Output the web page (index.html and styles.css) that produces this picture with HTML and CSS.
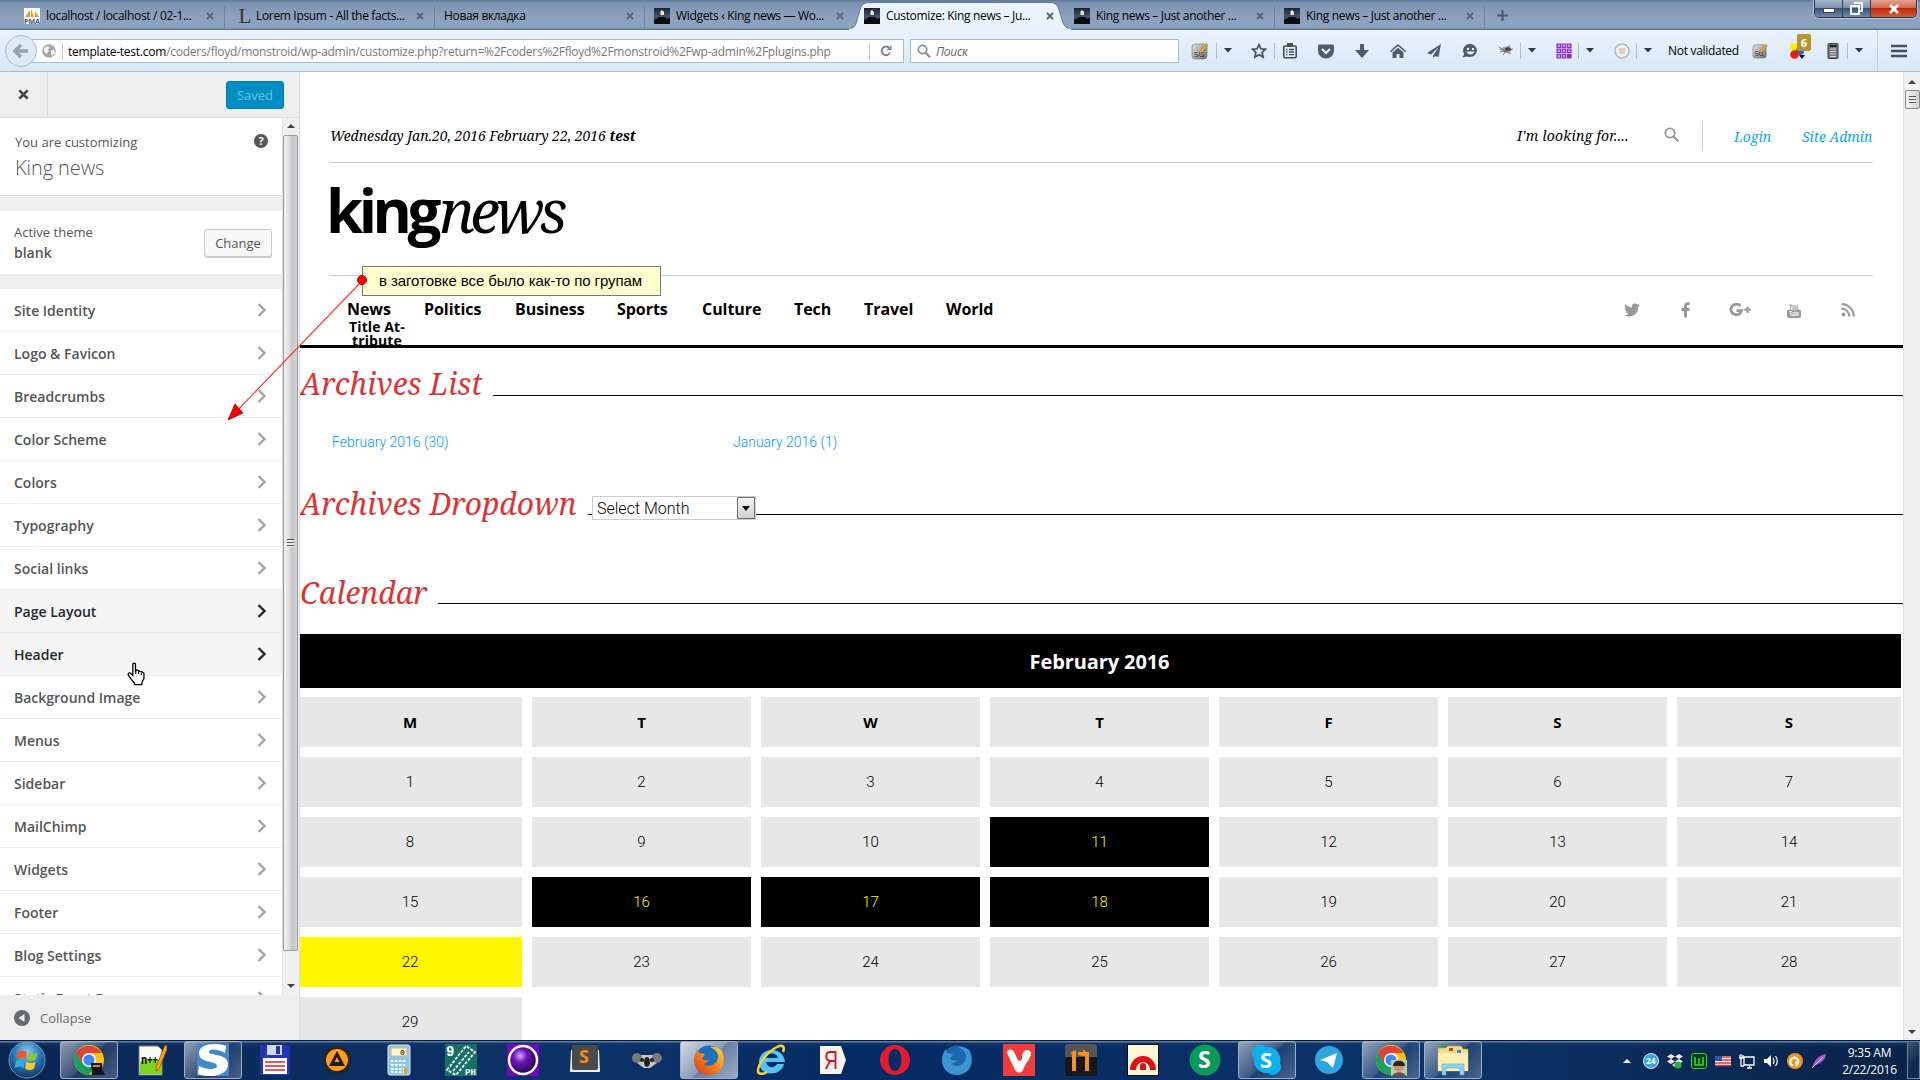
FILE: index.html
```html
<!DOCTYPE html>
<html lang="en">
<head>
<meta charset="utf-8">
<title>Customize: King news</title>
<link rel="stylesheet" href="styles.css">
</head>
<body>
<svg class="defs" width="0" height="0">
  <defs>
    <linearGradient id="night" x1="0" y1="0" x2="0" y2="1"><stop offset="0" stop-color="#1c2433"/><stop offset=".55" stop-color="#46546a"/><stop offset="1" stop-color="#0a0c10"/></linearGradient>
    <radialGradient id="orb" cx=".5" cy=".3" r=".75"><stop offset="0" stop-color="#8fd0ef"/><stop offset=".5" stop-color="#2a77b4"/><stop offset="1" stop-color="#0a2c5c"/></radialGradient>
    <radialGradient id="purple" cx=".4" cy=".35" r=".7"><stop offset="0" stop-color="#d9a8ff"/><stop offset=".35" stop-color="#6d14b8"/><stop offset="1" stop-color="#1b0040"/></radialGradient>
    <linearGradient id="fire" x1="1" y1="0" x2="0" y2="1"><stop offset="0" stop-color="#ffd83a"/><stop offset=".5" stop-color="#f58220"/><stop offset="1" stop-color="#d8331c"/></linearGradient>
    <linearGradient id="grey" x1="0" y1="0" x2="1" y2="1"><stop offset="0" stop-color="#e2e2df"/><stop offset="1" stop-color="#6d6d6b"/></linearGradient>
    <symbol id="chev" viewBox="0 0 10 16"><path d="M1.500 2 7.500 8l-6 6" fill="none" stroke="currentColor" stroke-width="2.400"/></symbol>
    <symbol id="x" viewBox="0 0 8 8"><path d="M1 1l6 6M7 1 1 7" stroke="currentColor" stroke-width="2" fill="none"/></symbol>
    <symbol id="fav" viewBox="0 0 16 16"><rect width="16" height="16" fill="url(#night)"/><path d="M0 16v-4l3-1 2-2h6l2 2 3-1v6z" fill="#0b0c0f"/><path d="M6.500 3l1.500-1 2 2v3H6.500z" fill="#f1ead2"/></symbol>
    <symbol id="caret" viewBox="0 0 8 5"><path d="M0 0h8L4 4.600z" fill="#30363c"/></symbol>
    <symbol id="scrap" viewBox="0 0 18 18"><rect x="1" y="2" width="15" height="15" rx="3" fill="url(#grey)" stroke="#777" stroke-width=".6"/><text x="3" y="15" font-size="8" font-family="Open Sans" fill="#333">SG</text><path d="M9 9 15.500 1.500 17 3l-6 7.500-2.500.700z" fill="#e5b931" stroke="#6a5a2c" stroke-width=".5"/></symbol>
    <symbol id="chrome" viewBox="0 0 32 32"><circle cx="16" cy="16" r="15" fill="#fbc116"/><path d="M3 8.500A15 15 0 0 0 16 31l6.500-11L16 16z" fill="#1aa15f"/><path d="M16 9h12.500A15 15 0 0 0 3 8.500l6 11z" fill="#db4437"/><circle cx="16" cy="16" r="7" fill="#fff"/><circle cx="16" cy="16" r="5.600" fill="#4285f4"/></symbol>
  </defs>
</svg>

<header class="tabs">
  <div class="tab"><svg class="fav" viewBox="0 0 16 16"><rect width="16" height="16" fill="#fff"/><path d="M1 9 6 2v7zM7 9V1l3 8zM11 9V3l4 6z" fill="#f7941d"/><text x="0" y="15.500" font-size="7" font-weight="bold" font-family="Open Sans" fill="#444a77">PMA</text></svg><span class="t">localhost / localhost / 02-1...</span><svg class="close"><use href="#x"/></svg></div>
  <div class="tab"><span class="fav letter">L</span><span class="t">Lorem Ipsum - All the facts...</span><svg class="close"><use href="#x"/></svg></div>
  <div class="tab bare"><span class="t">Новая вкладка</span><svg class="close"><use href="#x"/></svg></div>
  <div class="tab last"><svg class="fav"><use href="#fav"/></svg><span class="t">Widgets ‹ King news — Wo...</span><svg class="close"><use href="#x"/></svg></div>
  <div class="tab active"><svg class="shape" viewBox="0 0 226 30"><path d="M0 29.500C10 29 9 22 12 13 14 5 16 2.500 23 2.500H202c7 0 9 2.500 11 10.500 3 9 3 16 13 16.500V30H0z" fill="#eaf3fc" stroke="#5f7793"/><path d="M2 30h222" stroke="#eaf3fc" stroke-width="2.500"/></svg><svg class="fav"><use href="#fav"/></svg><span class="t">Customize: King news – Ju...</span><svg class="close"><use href="#x"/></svg></div>
  <div class="tab"><svg class="fav"><use href="#fav"/></svg><span class="t">King news – Just another ...</span><svg class="close"><use href="#x"/></svg></div>
  <div class="tab"><svg class="fav"><use href="#fav"/></svg><span class="t">King news – Just another ...</span><svg class="close"><use href="#x"/></svg></div>
  <svg class="plus" viewBox="0 0 11 11"><path d="M5.500 0v11M0 5.500h11" stroke="#4a5a6b" stroke-width="2.200"/></svg>
  <div class="winbtns">
    <span class="wb"><svg width="12" height="6"><rect x=".5" y=".5" width="11" height="4" fill="#fff" stroke="#445"/></svg></span>
    <span class="wb"><svg width="13" height="13"><path d="M4 1h8v8H9M1 4h8v8H1z" fill="none" stroke="#fff" stroke-width="1.800"/></svg></span>
    <span class="wb red"><svg width="12" height="10" viewBox="0 0 12 10"><path d="M2 1l8 8M10 1 2 9" stroke="#fff" stroke-width="2.800"/></svg></span>
  </div>
</header>

<nav class="bar">
  <div class="urlbox">
    <svg class="globe" viewBox="0 0 14 14"><circle cx="7" cy="7" r="6.800" fill="#a2a6aa"/><path d="M2 4l4-2 2 2-2 1 1 2-3 3-2-3zM9 6l3 0 1 3-3 3-1-3z" fill="#f3f4f5"/></svg>
    <span class="vsep"></span>
    <span class="url"><b>template-test.com</b>/coders/floyd/monstroid/wp-admin/customize.php?return=%2Fcoders%2Ffloyd%2Fmonstroid%2Fwp-admin%2Fplugins.php</span>
    <span class="vsep r"></span>
    <svg class="reload" viewBox="0 0 12 12"><path d="M10 7.500A4.300 4.300 0 1 1 9 2.800" fill="none" stroke="#7a8996" stroke-width="2"/><path d="M11.500 0v5h-5z" fill="#7a8996"/></svg>
  </div>
  <svg class="back" viewBox="0 0 34 34"><circle cx="17" cy="17" r="15.500" fill="#dfeaf5" stroke="#a9bccf"/><path d="M24 17H12M17 11l-6 6 6 6" fill="none" stroke="#95a3b0" stroke-width="3.600"/></svg>
  <div class="search"><svg width="14" height="14" viewBox="0 0 14 14"><circle cx="5.500" cy="5.500" r="4.200" fill="none" stroke="#8c9196" stroke-width="1.800"/><path d="m8.500 8.500 4.500 5" stroke="#8c9196" stroke-width="2.200"/></svg><i>Поиск</i></div>
  <div class="tools">
    <svg class="i18 g1"><use href="#scrap"/></svg><span class="sep"></span><svg class="car"><use href="#caret"/></svg>
    <svg class="i16 g2" viewBox="0 0 16 16"><path d="m8 1.500 1.900 4.300 4.600.500-3.400 3.100 1 4.600L8 11.700 3.900 14l1-4.600L1.500 6.300l4.600-.5z" fill="none" stroke="#44505c" stroke-width="1.700"/></svg>
    <span class="sep tight"></span>
    <svg class="i16 g3" viewBox="0 0 16 16"><rect x="1.800" y="3" width="12.400" height="11.800" rx="1" fill="none" stroke="#44505c" stroke-width="1.600"/><path d="M5 0h6v4H5z" fill="#44505c"/><path d="M4 6.500h1.500M7 6.500h5M4 9h1.500M7 9h5M4 11.700h1.500M7 11.700h5" stroke="#44505c" stroke-width="1.300"/></svg>
    <svg class="i16 g4" viewBox="0 0 16 16"><path d="M1.500 1.500h13a1.500 1.500 0 0 1 1.500 1.500v4.500a8 8 0 0 1-16 0V3a1.500 1.500 0 0 1 1.500-1.500z" fill="#505c68"/><path d="m4 6 4 4 4-4" fill="none" stroke="#eef4fb" stroke-width="2"/></svg>
    <svg class="i16 g4" viewBox="0 0 16 16"><path d="M6 1h4v6h5l-7 8-7-8h5z" fill="#505c68"/></svg>
    <svg class="i16 g4" viewBox="0 0 16 16"><path d="M8 1 0 8l1 1.200L8 3l7 6.200L16 8z" fill="#505c68"/><path d="M2.500 9.500 8 4.800l5.500 4.700V15H9.500v-4h-3v4h-4z" fill="#505c68"/></svg>
    <svg class="i16 g4" viewBox="0 0 16 16"><path d="M15 1 1 10l4 1.500L13 4l-6 8.500V15l2-2 3.500 1z" fill="#505c68"/></svg>
    <svg class="i16 g4" viewBox="0 0 16 16"><path d="M8.500 1a7 6.500 0 1 1-3.500 12.400L.5 14.500l1.700-3.500A6.500 6.500 0 0 1 8.500 1z" fill="#505c68"/><circle cx="6" cy="6" r="1.200" fill="#eef4fb"/><circle cx="11" cy="6" r="1.200" fill="#eef4fb"/><path d="M4.500 8.500h8c-1 4-7 4-8 0z" fill="#eef4fb"/></svg>
    <svg class="i16 g4" viewBox="0 0 16 16"><path d="M1 6l5-2 5-1 3 4-3 3-4 0z" fill="#a5a5a0"/><path d="M1 4l12 7M12 2 5 12M15 6 2 9" stroke="#6a6865" stroke-width=".8"/><ellipse cx="10" cy="6" rx="3" ry="1.800" fill="#4a4743"/></svg>
    <span class="sep f1"></span><svg class="car"><use href="#caret"/></svg>
    <svg class="i16 g5" viewBox="0 0 16 16"><g fill="#c79be6" stroke="#8a2fc0" stroke-width="1.200"><path d="M1 1h3.500v3.500H1zM6.200 1h3.500v3.500H6.200zM11.500 1H15v3.500h-3.500zM1 6.200h3.500v3.500H1zM6.200 6.200h3.500v3.500H6.200zM11.500 6.200H15v3.500h-3.500zM1 11.500h3.500V15H1zM6.200 11.500h3.500V15H6.200z"/><path d="M11.500 11.500H15V15h-3.500z" fill="#8a2fc0"/></g></svg>
    <span class="sep f1"></span><svg class="car"><use href="#caret"/></svg>
    <svg class="i16 g5" viewBox="0 0 16 16"><circle cx="8" cy="8" r="7" fill="#f0f1f2" stroke="#b3b7bb" stroke-width="1.600"/><rect x="5" y="5" width="6" height="6" fill="#dccfc0"/></svg>
    <span class="sep f1"></span><svg class="car"><use href="#caret"/></svg>
    <span class="nv">Not validated</span>
    <svg class="i16 g6"><use href="#scrap"/></svg>
    <span class="balls"><svg width="18" height="16" viewBox="0 0 18 16"><circle cx="5" cy="4" r="4" fill="#fdf000"/><circle cx="11" cy="8" r="4" fill="#2563d8"/><circle cx="5.500" cy="11.500" r="4.300" fill="#f01a10"/><path d="M10 12h6l-3 4z" fill="#111"/></svg><em>6</em></span>
    <svg class="i16 g7" viewBox="0 0 16 16"><rect x="3" y=".5" width="10" height="15" rx="1" fill="#77797b" stroke="#3a3c3e"/><rect x="4.500" y="2" width="7" height="2" fill="#222"/><path d="M5 6h6M5 8.500h6M5 11h6M5 13.500h6" stroke="#d5d5d5"/></svg>
    <span class="sep f1"></span><svg class="car"><use href="#caret"/></svg>
    <span class="menu"><svg width="16" height="14"><path d="M0 2h16M0 7h16M0 12h16" stroke="#44505c" stroke-width="2.600"/></svg></span>
  </div>
</nav>

<main class="view">
  <aside class="side">
    <div class="sidehead"><span class="sx"><svg width="11" height="11"><use href="#x"/></svg></span><span class="saved">Saved</span></div>
    <div class="sidebody">
      <div class="panels">
        <div class="info"><div><p>You are customizing</p><h2>King news</h2></div><span class="help">?</span></div>
        <div class="theme"><div><p>Active theme</p><strong>blank</strong></div><span class="change">Change</span></div>
        <ul>
          <li>Site Identity<svg><use href="#chev"/></svg></li>
          <li>Logo &amp; Favicon<svg><use href="#chev"/></svg></li>
          <li>Breadcrumbs<svg><use href="#chev"/></svg></li>
          <li>Color Scheme<svg><use href="#chev"/></svg></li>
          <li>Colors<svg><use href="#chev"/></svg></li>
          <li>Typography<svg><use href="#chev"/></svg></li>
          <li>Social links<svg><use href="#chev"/></svg></li>
          <li class="on">Page Layout<svg><use href="#chev"/></svg></li>
          <li class="on">Header<svg><use href="#chev"/></svg></li>
          <li>Background Image<svg><use href="#chev"/></svg></li>
          <li>Menus<svg><use href="#chev"/></svg></li>
          <li>Sidebar<svg><use href="#chev"/></svg></li>
          <li>MailChimp<svg><use href="#chev"/></svg></li>
          <li>Widgets<svg><use href="#chev"/></svg></li>
          <li>Footer<svg><use href="#chev"/></svg></li>
          <li>Blog Settings<svg><use href="#chev"/></svg></li>
          <li>Static Front Page<svg><use href="#chev"/></svg></li>
        </ul>
      </div>
      <div class="scroll"><i class="up"></i><div class="thumb"><b></b></div><i class="down"></i></div>
    </div>
    <div class="collapse"><svg width="16" height="16"><circle cx="8" cy="8" r="8" fill="#656a6f"/><path d="M10.500 4v8L4.500 8z" fill="#eee"/></svg>Collapse</div>
  </aside>

  <section class="page">
    <div class="wrap">
      <div class="top">
        <span class="date">Wednesday Jan.20, 2016 February 22, 2016 <b>test</b></span>
        <span class="looking">I'm looking for....</span>
        <svg class="mag" viewBox="0 0 16 16"><circle cx="6" cy="6" r="4.700" fill="none" stroke="#999" stroke-width="1.800"/><path d="m9.500 9.500 5 5" stroke="#999" stroke-width="2.200"/></svg>
        <span class="line"></span>
        <a class="login">Login</a><a class="admin">Site Admin</a>
      </div>
      <div class="logo"><span class="king">king</span><span class="news">news</span></div>
      <div class="menurow">
        <div class="m1"><span>News</span><small>Title At-<br>tribute</small></div>
        <span class="m2">Politics</span><span class="m3">Business</span><span class="m4">Sports</span><span class="m5">Culture</span><span class="m6">Tech</span><span class="m7">Travel</span><span class="m8">World</span>
        <div class="social">
          <svg viewBox="0 0 16 16"><path d="M16 3.500l-1.700 1.600C14.300 11 10 14.500 5.500 14.500c-2 0-4-.6-5.500-1.500 2 .2 3.500-.3 4.800-1.300-1.500-.1-2.600-1-3-2.300h1.400C1.600 9 .7 7.700.7 6l1.400.4C.8 5.300.4 3.600 1.200 2 3 4 5 5.200 7.900 5.400 7.400 3 9 1.500 11 1.500c1 0 1.800.4 2.400 1l2-.8-1.300 1.900z" fill="#999"/></svg>
          <svg viewBox="0 0 16 16"><path d="M6 15.500V9H3.500V6H6V4c0-2.500 1.500-3.700 3.700-3.700.9 0 1.700.1 2 .1V3h-1.300C9.300 3 9 3.500 9 4.400V6h2.700l-.4 3H9v6.500z" fill="#999"/></svg>
          <svg class="wide" viewBox="0 0 22 16"><path d="M11.500 4A5.400 5.400 0 1 0 12.600 8.700H7.500" fill="none" stroke="#999" stroke-width="2.800"/><path d="M18.500 4.500v6.400M15.300 7.700h6.400" stroke="#999" stroke-width="2.200"/></svg>
          <svg viewBox="0 0 16 16"><text x="3" y="6.500" font-size="8" textLength="9" lengthAdjust="spacingAndGlyphs" font-family="Liberation Sans" font-weight="bold" fill="#999">You</text><rect x="1" y="7.500" width="14" height="8.500" rx="2" fill="#999"/><text x="3" y="14.300" font-size="7" textLength="10" lengthAdjust="spacingAndGlyphs" font-family="Liberation Sans" font-weight="bold" fill="#fff">Tube</text></svg>
          <svg viewBox="0 0 16 16"><circle cx="3.500" cy="12.500" r="1.900" fill="#999"/><path d="M1.500 6.700a7.800 7.800 0 0 1 7.800 7.800M1.500 2.200A12.300 12.300 0 0 1 13.800 14.500" fill="none" stroke="#999" stroke-width="2.200"/></svg>
        </div>
      </div>
    </div>
    <div class="h h1"><span>Archives List</span><i></i></div>
    <div class="links"><a>February 2016 (30)</a><a>January 2016 (1)</a></div>
    <div class="h h2"><span>Archives Dropdown</span><i class="stub"></i><div class="select">Select Month<em><svg width="8" height="5"><path d="M0 0h8L4 5z"/></svg></em></div><i></i></div>
    <div class="h h3"><span>Calendar</span><i></i></div>
    <div class="cap">February 2016</div>
    <div class="cal">
      <b>M</b><b>T</b><b>W</b><b>T</b><b>F</b><b>S</b><b>S</b>
      <span>1</span><span>2</span><span>3</span><span>4</span><span>5</span><span>6</span><span>7</span>
      <span>8</span><span>9</span><span>10</span><span class="k">11</span><span>12</span><span>13</span><span>14</span>
      <span>15</span><span class="k">16</span><span class="k">17</span><span class="k">18</span><span>19</span><span>20</span><span>21</span>
      <span class="y">22</span><span>23</span><span>24</span><span>25</span><span>26</span><span>27</span><span>28</span>
      <span>29</span>
    </div>
  </section>
  <div class="pscroll"><i class="up"></i><div class="thumb"><b></b></div><i class="down"></i></div>
</main>

<footer class="task">
  <svg class="start" viewBox="0 0 38 38"><circle cx="19" cy="19" r="18" fill="url(#orb)" stroke="#7fb0d4" stroke-width=".8"/><path d="M10 11c3-2 6-2 9 0l-1.500 7c-3-2-6-2-9 0z" fill="#f0582c"/><path d="M20.500 11.500c3 2 6 2 9 0L28 18.500c-3 2-6 2-9 0z" fill="#8cc63f"/><path d="M8 20c3-2 6-2 9 0l-1.500 7c-3-2-6-2-9 0z" fill="#3aa7e4"/><path d="M18.500 20.500c3 2 6 2 9 0L26 27.500c-3 2-6 2-9 0z" fill="#fdc92d"/></svg>
  <div class="apps">
    <span class="app run"><svg viewBox="0 0 32 32"><use href="#chrome"/><path d="M18 19h11v6l3 6H19z" fill="#15161a"/><path d="M20 22h7" stroke="#c98d5a" stroke-width="2"/></svg></span>
    <span class="app"><svg viewBox="0 0 32 32"><path d="M4 2h19l4 4v25H4z" fill="#f7fbf2" stroke="#777"/><path d="M5 18c8-4 14-4 22-1v13H5z" fill="#7ed321"/><text x="6" y="20" font-size="13" font-weight="bold" font-family="Open Sans" textLength="17" lengthAdjust="spacingAndGlyphs">n++</text><path d="M30 1l3 2-9 22-3 2v-4z" fill="#f2a51e" stroke="#8b4a12" stroke-width=".7"/></svg></span>
    <span class="app run"><svg viewBox="0 0 32 32"><rect width="32" height="32" fill="#418ac9"/><path d="M29 2C18-2 2 0 2 9c0 11 18 7 18 13 0 4-11 4-18 0l-1 8c10 4 30 3 30-10C31 9 12 12 12 8c0-4 10-3 16 1z" fill="#fff"/></svg></span>
    <span class="app"><svg viewBox="0 0 32 32"><path d="M1 1h28l2 2v28H1z" fill="#2335b5"/><path d="M8 1h15v10H8z" fill="#d5d8e6"/><path d="M17 2h4v8h-4z" fill="#2335b5"/><path d="M4 14h24v16H4z" fill="#fff"/><path d="M6 18h20M6 22h20M6 26h20" stroke="#d22" stroke-width="1.300"/></svg></span>
    <span class="app"><svg viewBox="0 0 32 32"><circle cx="16" cy="16" r="14" fill="#292321"/><circle cx="16" cy="16" r="11" fill="#ff9d1b"/><path d="M16 7 24 22H8zM16 13l-2.500 5h5z" fill="#1d1a18" fill-rule="evenodd"/></svg></span>
    <span class="app"><svg viewBox="0 0 32 32"><rect x="5" y="1" width="22" height="30" rx="2" fill="#8cc5ea" stroke="#d9eefa"/><rect x="8" y="4" width="16" height="8" fill="#fff5d5" stroke="#e8b560"/><text x="17" y="11" font-size="8" font-family="Liberation Mono">0</text><path d="M8 17h16M8 21h16M8 25h16M8 28h16" stroke="#fff" stroke-width="2.200" stroke-dasharray="2.500 1.500"/><path d="M21 24h3v6h-3z" fill="#f59b23"/></svg></span>
    <span class="app"><svg viewBox="0 0 32 32"><rect width="32" height="32" fill="#157066"/><path d="m2 26 19-24 9 6-19 23zM8 27l16-19" fill="none" stroke="#fff" stroke-width="1.800" stroke-dasharray="3 1.500"/><text x="1" y="12" font-size="14" font-weight="bold" font-family="Liberation Mono" fill="#fff">9</text><text x="20" y="31" font-size="9" font-weight="bold" font-family="Liberation Mono" fill="#fff">PH</text></svg></span>
    <span class="app"><svg viewBox="0 0 32 32"><rect width="32" height="32" fill="#6d08bc"/><circle cx="16" cy="16" r="14" fill="url(#purple)" stroke="#fff" stroke-width="2.500"/></svg></span>
    <span class="app"><svg viewBox="0 0 32 32"><path d="M2 6h28l1 22H1z" fill="#ececec"/><rect x="3" y="1" width="26" height="25" rx="2" fill="#4a4a4a"/><text x="10" y="19" font-size="18" font-weight="bold" font-family="Open Sans" fill="#f78d1f">S</text></svg></span>
    <span class="app"><svg viewBox="0 0 32 32"><path d="M8 11h16l2 8-7 5h-6l-7-5z" fill="#c4c4c4"/><circle cx="6" cy="14" r="5" fill="#77797b"/><circle cx="26" cy="14" r="5" fill="#77797b"/><ellipse cx="16" cy="18" rx="3" ry="5" fill="#202020"/><circle cx="11" cy="16" r="2" fill="#222"/><circle cx="21" cy="16" r="2" fill="#222"/></svg></span>
    <span class="app run hot"><svg viewBox="0 0 32 32"><circle cx="16" cy="15.500" r="14" fill="#1d70b8"/><path d="M29 7c5 12-1 24-13 24C6 31 1 24 1 16c0-5 2-9 4-11l1 4 6 1-3 5c2 1 4 2 7 1-1 3-5 3-5 4 5 5 15 0 14-9-1-4-4-6-8-8 5-1 9 1 12 4z" fill="url(#fire)"/></svg></span>
    <span class="app"><svg viewBox="0 0 32 32"><path d="M30 18H11c1 6 8 7 11 2h7c-3 13-25 13-25-2C4 2 29 2 30 18zM11 14h12c-1-6-11-6-12 0z" fill="#54c4f4" fill-rule="evenodd"/><path d="M28 8c2-5 0-8-6-5C12 8 3 20 3 27c0 3 4 4 9 1" fill="none" stroke="#f7cf32" stroke-width="2.500"/></svg></span>
    <span class="app"><svg viewBox="0 0 32 32"><path d="M3 2h21l5 14-5 14H3z" fill="#f5f5f5"/><text x="7" y="25" font-size="25" textLength="14" lengthAdjust="spacingAndGlyphs" font-family="Liberation Sans" fill="#d8121c">Я</text></svg></span>
    <span class="app"><svg viewBox="0 0 32 32"><path d="M16 1a15 15 0 1 0 0 30 15 15 0 1 0 0-30zm0 4c9 0 8 22 0 22S7 5 16 5z" fill="#e21b2d" fill-rule="evenodd"/></svg></span>
    <span class="app"><svg viewBox="0 0 32 32"><circle cx="16" cy="16" r="14.500" fill="#1c67ab"/><path d="M29 7c5 12-1 24-13 24C6 31 1 24 1 16c0-5 2-9 4-11l1 4 6 1-3 5c2 1 4 2 7 1-1 3-5 3-5 4 5 5 15 0 14-9-1-4-4-6-8-8 5-1 9 1 12 4z" fill="#3b93d2"/></svg></span>
    <span class="app"><svg viewBox="0 0 32 32"><rect width="32" height="32" fill="#ef3d3b"/><path d="M4 9c0-4 5-5 7-1l4 8c1 2 3 1 4-1 0-3 0-4 1-6 2-5 9-3 8 1-1 5-6 10-8 16-2 4-6 3-8 0z" fill="#fff"/></svg></span>
    <span class="app"><svg viewBox="0 0 32 32"><rect width="32" height="32" rx="3" fill="#171717"/><path d="M0 3a3 3 0 0 1 3-3h26a3 3 0 0 1 3 3v10H0z" fill="#555"/><path d="M6 8l5-2v21H7V11zM13 8h5V5l3 3h3v19h-4V12h-3l-4-1z" fill="#f7901e"/></svg></span>
    <span class="app"><svg viewBox="0 0 32 32"><rect x=".5" y=".5" width="31" height="31" fill="#fff8d8" stroke="#111"/><path d="M3 26a13 14 0 0 1 26 0h-6a7 8 0 0 0-14 0zM13 26v-4a3 3 0 0 1 6 0v4z" fill="#e30b17"/></svg></span>
    <span class="app"><svg viewBox="0 0 32 32"><circle cx="16" cy="16" r="15.500" fill="#0b9a58"/><text x="9" y="24" font-size="23" font-weight="bold" font-family="Open Sans" fill="#fff">S</text></svg></span>
    <span class="app run"><svg viewBox="0 0 32 32"><path d="M9 1a8 8 0 0 1 6 2 13 13 0 0 1 14 16 8 8 0 0 1-12 10A13 13 0 0 1 3 14 8 8 0 0 1 9 1z" fill="#0cb0ee"/><text x="9" y="24" font-size="22" font-weight="bold" font-family="Open Sans" fill="#fff">S</text></svg></span>
    <span class="app"><svg viewBox="0 0 32 32"><circle cx="16" cy="16" r="14" fill="#2ca5e0"/><path d="M7 16 24 9l-4 15-6-6z" fill="#fff"/></svg></span>
    <span class="app run"><svg viewBox="0 0 32 32"><use href="#chrome"/><rect x="16" y="16" width="16" height="16" fill="#b5cda0"/><circle cx="24" cy="23" r="5" fill="#c99274"/><path d="M18 22c0-7 12-7 12 0z" fill="#2a2320"/><path d="M17 32c2-5 12-5 14 0z" fill="#67504a"/></svg></span>
    <span class="app run"><svg viewBox="0 0 32 32"><path d="M1 4h8l2-2h13l2 3h5v22H1z" fill="#f3dd87" stroke="#b99b3f" stroke-width=".6"/><path d="M4 1h4v3H4z" fill="#23a641"/><path d="M12 4h4v3h-4z" fill="#d33"/><path d="M20 6h4v3h-4z" fill="#2b8ee0"/><path d="M1 9h30v18H1z" fill="#fbeeb3"/><path d="M5 31V20h22v11h-4v-7H9v7z" fill="#8fd2ee" stroke="#5aa9cf" stroke-width=".6"/></svg></span>
  </div>
  <div class="tray">
    <svg viewBox="0 0 16 16"><path d="M4 10h8L8 6z" fill="#fff"/></svg>
    <svg viewBox="0 0 16 16"><circle cx="8" cy="8" r="7.500" fill="#38a7e0" stroke="#eee"/><text x="3" y="11" font-size="8.500" font-weight="bold" font-family="Open Sans" fill="#fff">24</text></svg>
    <svg viewBox="0 0 16 16"><path d="m4 1 4 2.500L4 6 0 3.500zM12 1l4 2.500L12 6 8 3.500zM4 6l4 2.500L4 11 0 8.500zM12 6l4 2.500-4 2.500-4-2.500zM8 10l3 2-3 2-3-2z" fill="#eee"/><circle cx="11" cy="12" r="3.500" fill="#2fae3b"/></svg>
    <svg viewBox="0 0 16 16"><rect x=".5" y=".5" width="15" height="15" rx="2" fill="#073c12" stroke="#35d33c"/><path d="M4 4v8h4V5v7h4V4" fill="none" stroke="#35d33c" stroke-width="1.600"/></svg>
    <svg viewBox="0 0 16 16"><path d="M0 3h16v10H0z" fill="#fff"/><path d="M0 4h16M0 7h16M0 10h16M0 12.500h16" stroke="#d53a44" stroke-width="1.400"/><path d="M0 3h7v5H0z" fill="#3553b0"/></svg>
    <svg viewBox="0 0 16 16"><path d="M5 4h10v8H5zM8 15h5M10.500 12v3M2 1v4M0 2v3h4V2M2 5v8h3" fill="none" stroke="#fff" stroke-width="1.300"/></svg>
    <svg viewBox="0 0 16 16"><path d="M1 6h3l4-4v12l-4-4H1z" fill="#fff"/><path d="M10 5q2 3 0 6M12.500 3q3.500 5 0 10" fill="none" stroke="#fff" stroke-width="1.200"/></svg>
    <svg viewBox="0 0 16 16"><circle cx="8" cy="8" r="8" fill="#f5931e"/><path d="M6 12.500A4 4 0 1 1 9.500 12V8.500" fill="none" stroke="#fff" stroke-width="2.200"/></svg>
    <svg viewBox="0 0 16 16"><path d="M1 15C3 8 7 2 15 1c0 5-5 10-11 11z" fill="#a05bd0"/><path d="M1 15 12 4" stroke="#e3c8f5"/></svg>
  </div>
  <div class="clock">9:35 AM<br>2/22/2016</div>
  <div class="peek"></div>
</footer>

<svg class="note-arrow" viewBox="0 0 150 160"><path d="M142 10 12 145" stroke="#f33" stroke-width="1.100"/><path d="m8 149 7-16 8 9z" fill="#f00" stroke="#8c0000" stroke-width=".8"/></svg>
<div class="note">в заготовке все было как-то по групам</div>
<span class="dot"></span>
<svg class="hand" viewBox="0 0 17 22"><path d="M5.500 1.500q1.500-1.300 2.500 0V8l1-.8 2 .6 1 .7 2 .3 2 1.500v5l-2 4v1.700H7v-1.500L4 16l-3-4.500q.5-2 2-1.300l2.500 2z" fill="#fff" stroke="#000" stroke-width="1.200"/><path d="M8.300 8v3M11 8.500V11M13.500 9.500V12" stroke="#000"/></svg>
</body>
</html>
```
FILE: styles.css
```css
* { box-sizing: border-box; }
body { margin: 0; width: 1920px; height: 1080px; overflow: hidden; display: flex; flex-direction: column; background: #fff; font-family: "Open Sans", sans-serif; position: relative; }
p, h2, ul { margin: 0; padding: 0; font-weight: normal; }
svg { display: block; flex: none; }
.defs { position: absolute; }

/* browser tabs */
.tabs { height: 30px; flex: none; display: flex; padding-left: 15px; background: linear-gradient(#5d7899 0, #7b92b2 10%, #8da1bd 55%, #8ba3c1 93%, #5f7793 97%); }
.tab { width: 210px; flex: none; height: 27px; margin-top: 2px; display: flex; align-items: center; padding-left: 9px; font-size: 12px; position: relative; }
.tab::after { content: ""; position: absolute; right: 0; top: 4px; height: 22px; width: 1px; background: #6f849f; }
.tab.bare { padding-left: 9px; }
.tab.last::after, .tab.active::after { display: none; }
.tab .fav { width: 16px; height: 16px; margin-right: 6px; position: relative; }
.tab .letter { font: 21px/16px "Liberation Serif", serif; color: #333; margin-right: 3px; margin-left: 3px; text-align: center; }
.tab .t { letter-spacing: -.33px; white-space: nowrap; flex: 1; position: relative; color: #000; }
.tab .close { width: 8px; height: 8px; color: #56687c; margin-right: 11px; position: relative; }
.tab .shape { position: absolute; left: -8px; top: -2px; width: 226px; height: 30px; }
.plus { width: 11px; height: 11px; margin: 10px 0 0 12px; }
.winbtns { margin-left: auto; margin-right: 3px; width: 103px; height: 18px; display: flex; border: 1px solid #26374f; border-top: 0; border-radius: 0 0 5px 5px; box-shadow: 0 0 0 1px #b4c4d8; overflow: hidden; }
.wb { width: 28px; display: flex; align-items: center; justify-content: center; background: linear-gradient(#a7b7cb, #8193ac 45%, #3b5272 50%, #6f89ab); border-right: 1px solid #33435a; }
.wb:first-child svg { margin-top: 5px; }
.wb.red { flex: 1; border: 0; background: linear-gradient(#e3a090, #cf6a52 45%, #ba2a0c 50%, #d45a35); }

/* navigation toolbar */
.bar { height: 42px; flex: none; display: flex; align-items: center; background: linear-gradient(#eaf3fc, #d9e7f5); border-bottom: 1px solid #a0bdd6; position: relative; font-size: 12px; }
.urlbox { width: 884px; margin-left: 20px; height: 24px; margin-top: 1px; background: #fff; border: 1px solid #a9bdd1; display: flex; align-items: center; padding-left: 21px; }
.globe { width: 14px; height: 14px; }
.vsep { width: 1px; height: 17px; background: #c5ccd4; margin: 0 5px 0 6px; }
.url { flex: 1; white-space: nowrap; color: #777; letter-spacing: -.245px; }
.url b { font-weight: normal; color: #000; }
.vsep.r { margin: 0 10px 0 0; }
.reload { width: 12px; height: 12px; margin-right: 11px; }
.back { position: absolute; left: 4px; top: 4px; width: 34px; height: 34px; }
.search { width: 269px; margin: 1px 0 0 6px; height: 24px; background: #fff; border: 1px solid #a9bdd1; display: flex; align-items: center; padding-left: 6px; gap: 5px; color: #666; letter-spacing: -.3px; }
.tools { flex: 1; display: flex; align-items: center; height: 41px; }
.i18 { width: 18px; height: 18px; }
.i16 { width: 16px; height: 16px; }
.g1 { margin-left: 12px; }
.g2 { margin-left: 19px; }
.g3 { margin-left: 7px; }
.g4 { margin-left: 20px; }
.g5 { margin-left: 20px; }
.g6 { margin-left: 13px; }
.g7 { margin-left: 14px; }
.sep { width: 1px; height: 16px; background: #b0bfcd; margin: 0 7px 0 7px; flex: none; }
.sep.tight { margin: 0 0 0 7px; }
.sep.f1 { margin: 0 7px 0 6px; }
.car { width: 8px; height: 5px; }
.nv { margin-left: 16px; width: 71px; white-space: nowrap; letter-spacing: -.3px; }
.balls { position: relative; width: 22px; margin-left: 21px; }
.balls em { position: absolute; left: 8px; top: -9px; width: 14px; height: 17px; background: #b3972d; color: #fff; font: bold 11px/17px "Open Sans"; text-align: center; border-radius: 2px; }
.menu { margin-left: auto; height: 41px; border-left: 1px solid #c3d2e0; width: 43px; display: flex; align-items: center; padding-left: 13px; }

/* content frame */
.view { flex: none; height: 968px; display: flex; }
.side { width: 300px; flex: none; border-right: 1px solid #ddd; display: flex; flex-direction: column; background: #eee; color: #555; font-size: 13px; }
.sidehead { height: 46px; flex: none; display: flex; justify-content: space-between; border-bottom: 1px solid #ddd; padding-right: 15px; }
.sx { width: 48px; border-right: 1px solid #ddd; display: flex; align-items: center; justify-content: center; color: #444; }
.saved { width: 58px; height: 28px; margin-top: 9px; background: #008ec2; border: 1px solid #007cb2; border-radius: 3px; color: #66c6e4; text-align: center; line-height: 26px; }
.sidebody { flex: 1; min-height: 0; display: flex; }
.panels { width: 282px; overflow: hidden; }
.info { height: 78px; background: #fff; border-bottom: 1px solid #ddd; padding: 14px 14px 0 15px; display: flex; justify-content: space-between; line-height: 20px; }
.info h2 { font-size: 20px; font-weight: 300; line-height: 32px; letter-spacing: -.1px; }
.help { width: 14px; height: 14px; border-radius: 50%; background: #555; color: #fff; font: bold 11px/14px "Open Sans"; text-align: center; margin-top: 2px; }
.theme { height: 63px; margin: 15px 0 15px; background: #fff; padding: 11px 10px 0 14px; display: flex; justify-content: space-between; line-height: 20px; }
.theme strong { font-weight: 600; font-size: 14px; display: block; margin-top: 1px; }
.change { width: 68px; height: 28px; margin-top: 7px; border: 1px solid #ccc; border-radius: 3px; background: #f7f7f7; box-shadow: 0 1px 0 #ccc; text-align: center; line-height: 26px; }
.panels ul { list-style: none; }
.panels li { height: 43px; background: #fff; border-bottom: 1px solid #eee; font-weight: 600; font-size: 14px; letter-spacing: 0; display: flex; align-items: center; justify-content: space-between; padding: 0 15px 0 14px; }
.panels li svg { width: 10px; height: 16px; color: #a0a5aa; }
.panels li.on { background: #f5f5f5; color: #23282d; }
.panels li.on svg { color: #23282d; }
.scroll { width: 17px; background: #f0f0f0; border-left: 1px solid #e3e3e3; display: flex; flex-direction: column; align-items: center; padding-right: 1px; }
.up, .down { border: 4px solid transparent; height: 0; width: 0; flex: none; }
.up { border-top: 0; border-bottom: 4px solid #444; margin-top: 6px; }
.down { border-bottom: 0; border-top: 4px solid #444; margin-top: auto; }
.scroll .down { margin-bottom: 7px; }
.scroll .thumb { width: 15px; height: 816px; margin-top: 7px; border: 1px solid #999; border-radius: 2px; background: linear-gradient(90deg, #f2f2f2, #e0e0e2 40%, #c5c5ca 60%, #d5d5d8); display: flex; align-items: center; justify-content: center; }
.thumb b { width: 7px; height: 8px; background: repeating-linear-gradient(#555 0 1px, #eee 1px 3px); }
.collapse { height: 45px; flex: none; display: flex; align-items: center; gap: 9px; padding-left: 14px; color: #656a6f; }
.collapse svg { margin-right: 1px; }

/* preview */
.page { width: 1603px; color: #000; flex: none; overflow: hidden; }
.wrap { padding: 0 30px; height: 276px; border-bottom: 3px solid #000; }
.top { height: 91px; border-bottom: 1px solid #ccc; display: flex; align-items: center; padding-top: 36px; font: italic 14px "Noto Serif", "Droid Serif", "DejaVu Serif Condensed", "DejaVu Serif", serif; white-space: nowrap; }
.date { width: 1187px; letter-spacing: -.04px; }
.looking { width: 147px; letter-spacing: .22px; }
.mag { width: 16px; height: 16px; }
.line { width: 1px; height: 29px; background: #ccc; margin: 0 31px 0 22px; }
.top a { color: #0ea5f5; margin-top: 2px; }
.login { width: 68px; }
.logo { height: 113px; border-bottom: 1px solid #ccc; font-size: 60px; display: flex; line-height: 94px; white-space: nowrap; }
.king { font-weight: 700; letter-spacing: -4.5px; width: 113px; margin-left: -4px; }
.news { font-family: "Noto Serif", "Droid Serif", "DejaVu Serif Condensed", "DejaVu Serif", serif; font-style: italic; letter-spacing: -4.7px; }
.menurow { display: flex; font-weight: 700; font-size: 16px; line-height: 22px; padding: 22px 0 0 17px; height: 69px; overflow: hidden; letter-spacing: -.05px; }
.menurow small { display: block; font-size: 14px; line-height: 14px; text-align: center; width: 60px; letter-spacing: .1px; }
.m1 { width: 77px; }
.m2 { width: 91px; } .m3 { width: 102px; } .m4 { width: 85px; } .m5 { width: 92px; } .m6 { width: 70px; } .m7 { width: 82px; }
.social { margin-left: auto; display: flex; gap: 38px; padding: 4px 17px 0 0; }
.social svg { width: 16px; height: 16px; }
.social .wide { width: 22px; margin: 0 -3px; }
.h { display: flex; font: italic 30px/40px "Noto Serif", "Droid Serif", "DejaVu Serif Condensed", "DejaVu Serif", serif; color: #dd3333; height: 40px; white-space: nowrap; letter-spacing: .05px; }
.h i { flex: 1; height: 1px; background: #000; margin-top: 31px; }
.h1 { margin-top: 16px; } .h1 span { width: 193px; }
.links { display: flex; height: 40px; margin-top: 28px; padding-left: 32px; font: 300 14px/20px Roboto, sans-serif; color: #0099ff; }
.links a { width: 401px; }
.h2 { margin-top: 12px; } .h2 span { width: 288px; }
.h2 i { margin-top: 30px; }
.h2 i.stub { flex: none; width: 4px; }
.select { width: 164px; height: 24px; margin-top: 12px; border: 1px solid #ccc; background: #fff; font: 300 16px/23px Roboto, sans-serif; letter-spacing: 0; color: #000; display: flex; justify-content: space-between; padding-left: 4px; }
.select em { width: 18px; height: 22px; border: 1px solid #707070; background: linear-gradient(#f2f2f2, #d0d0d0); display: flex; align-items: center; justify-content: center; }
.h3 { margin-top: 49px; } .h3 span { width: 138px; }
.h3 i { margin-top: 30px; }
.cap { height: 54px; width: 1601px; padding-right: 2px; margin-top: 21px; background: #000; color: #fff; font-weight: 700; font-size: 20px; line-height: 55px; text-align: center; letter-spacing: -.1px; }
.cal { display: grid; grid-template-columns: 222px 219px 219px 219px 219px 219px 224px; grid-auto-rows: 50px; gap: 10px; margin-top: 9px; font: 300 15px/50px Roboto, sans-serif; text-align: center; }
.cal > * { background: #e7e7e7; }
.cal > :nth-child(7n+1) { padding-right: 2px; }
.cal b { font-weight: 700; font-size: 15px; font-family: "Open Sans"; }
.cal .k { background: #000; color: #fff600; }
.cal .y { background: #fff600; }
.pscroll { width: 17px; background: #f0f0f0; border-left: 1px solid #e3e3e3; display: flex; flex-direction: column; align-items: center; }
.pscroll .up { margin-top: 8px; }
.pscroll .thumb { width: 15px; height: 19px; margin-top: 6px; border: 1px solid #888; border-radius: 2px; background: linear-gradient(90deg, #f5f5f5, #d0d0d4); display: flex; align-items: center; justify-content: center; }
.pscroll .down { margin-bottom: 6px; }

/* taskbar */
.task { height: 40px; flex: none; display: flex; align-items: center; background: linear-gradient(#0b1c33 0 1px, #5b7ea8 1px 2px, rgba(20,60,110,.6) 3px, rgba(8,30,75,0) 8px), linear-gradient(90deg, #0a2653, #0d3268 30%, #062a63 45%, #0b3268 75%, #0a2348); }
.start { width: 38px; height: 38px; margin: 0 14px 0 8px; }
.apps { display: flex; gap: 4px; }
.app { width: 58px; height: 38px; display: flex; align-items: center; justify-content: center; border: 1px solid transparent; border-radius: 3px; }
.app svg { width: 32px; height: 32px; }
.app.run { border-color: #9db0ca; background: linear-gradient(135deg, rgba(255,255,255,.55), rgba(255,255,255,.2) 48%, rgba(255,255,255,.08) 52%, rgba(255,255,255,.25)); }
.app.hot { background: linear-gradient(135deg, #d3dae5, #8b9dba 50%, #687fa5 52%, #9aaac3); }
.tray { margin-left: auto; display: flex; gap: 8px; padding-top: 2px; }
.tray svg { width: 16px; height: 16px; }
.clock { width: 75px; margin: 1px 0 0 5px; color: #fff; font-size: 12px; line-height: 17px; text-align: center; letter-spacing: -.25px; }
.peek { width: 13px; height: 38px; border: 1px solid #6c86a8; background: linear-gradient(135deg, #3b5579, #10294d 60%); }

/* annotation and pointer */
.note-arrow { position: absolute; left: 220px; top: 271px; width: 150px; height: 160px; }
.note { position: absolute; left: 362px; top: 266px; width: 299px; height: 30px; background: #ffffd0; border: 1px solid #777; font: 15px/28px "Liberation Sans", sans-serif; letter-spacing: -.08px; padding-left: 16px; white-space: nowrap; color: #000; }
.dot { position: absolute; left: 357px; top: 275px; width: 10px; height: 10px; border-radius: 50%; background: #f00; border: 1px solid #a00; }
.hand { position: absolute; left: 127px; top: 662px; width: 18px; height: 24px; }
```
